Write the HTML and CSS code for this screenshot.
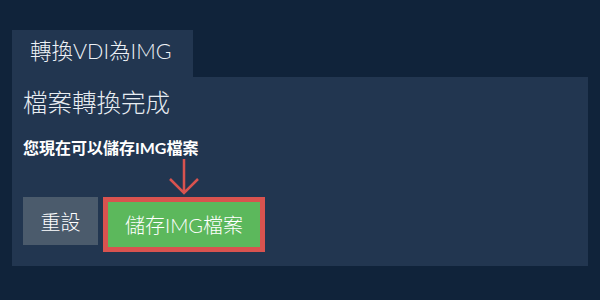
FILE: index.html
```html
<!DOCTYPE html>
<html lang="zh-Hant">
<head>
<meta charset="utf-8">
<link rel="stylesheet" href="styles.css">
</head>
<body>
<div class="wrap">
  <div class="tab">轉換VDI為IMG</div>
  <div class="panel">
    <h2 class="heading">檔案轉換完成</h2>
    <p class="note">您現在可以儲存IMG檔案</p>
    <div class="actions">
      <button class="btn reset">重設</button>
      <div class="save-wrap">
        <svg class="arrow" width="32" height="36" viewBox="0 0 32 36">
          <path d="M16 0 V34 M2 20 L16 34 L30 20" fill="none" stroke="#d9534f" stroke-width="2.5"/>
        </svg>
        <div class="highlight"><button class="btn save">儲存IMG檔案</button></div>
      </div>
    </div>
  </div>
</div>
</body>
</html>
```
FILE: styles.css
```css
* { box-sizing: border-box; }
html, body { margin: 0; padding: 0; }
body {
  width: 600px;
  height: 300px;
  background: #10233a;
  font-family: Lato, "Noto Sans CJK TC", sans-serif;
  color: #fff;
  overflow: hidden;
}
.wrap {
  padding: 30px 12px 0 12px;
}
.tab {
  display: inline-block;
  background: #223650;
  height: 47px;
  width: 181px;
  padding: 8px 0 0 18px;
  font-size: 21.5px;
  line-height: 26px;
  color: #eef2f6;
  font-weight: 300;
}
.panel {
  background: #223650;
  height: 189px;
  padding: 11px 11px 0 11px;
}
.heading {
  margin: 0;
  font-size: 24.5px;
  font-weight: 300;
  line-height: 30px;
  color: #e8edf2;
}
.note {
  margin: 20px 0 0 0;
  font-size: 16px;
  font-weight: 700;
  line-height: 20px;
}
.actions {
  display: flex;
  align-items: flex-start;
  gap: 5px;
  margin-top: 1px;
}
.btn {
  border: 0;
  color: #fff;
  font-family: Lato, "Noto Sans CJK TC", sans-serif;
  font-weight: 300;
  cursor: pointer;
}
.reset {
  margin-top: 38px;
  width: 75px;
  height: 48px;
  background: #4b5b6c;
  font-size: 20px;
}
.save-wrap {
  display: flex;
  flex-direction: column;
  align-items: center;
}
.arrow {
  display: block;
  height: 36px;
}
.highlight {
  margin-top: 2px;
  border: 5px solid #d9534f;
  background: #d9534f;
}
.save {
  display: block;
  width: 152px;
  height: 45px;
  background: #5cb85c;
  font-size: 20px;
}
```
